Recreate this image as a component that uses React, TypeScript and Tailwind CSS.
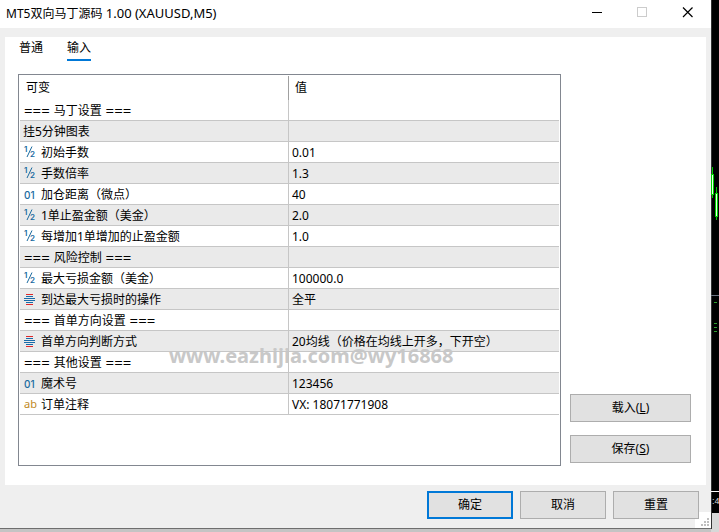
import type { ReactNode } from 'react';

type Kind = 'double' | 'int' | 'enum' | 'string';

type Row = { kind?: Kind; name: string; value?: string; heading?: boolean };

const rows: Row[] = [
  { name: '马丁设置', heading: true },
  { name: '挂5分钟图表' },
  { kind: 'double', name: '初始手数', value: '0.01' },
  { kind: 'double', name: '手数倍率', value: '1.3' },
  { kind: 'int', name: '加仓距离（微点）', value: '40' },
  { kind: 'double', name: '1单止盈金额（美金）', value: '2.0' },
  { kind: 'double', name: '每增加1单增加的止盈金额', value: '1.0' },
  { name: '风险控制', heading: true },
  { kind: 'double', name: '最大亏损金额（美金）', value: '100000.0' },
  { kind: 'enum', name: '到达最大亏损时的操作', value: '全平' },
  { name: '首单方向设置', heading: true },
  { kind: 'enum', name: '首单方向判断方式', value: '20均线（价格在均线上开多，下开空）' },
  { name: '其他设置', heading: true },
  { kind: 'int', name: '魔术号', value: '123456' },
  { kind: 'string', name: '订单注释', value: 'VX: 18071771908' },
];

function KindIcon({ kind }: { kind: Kind }) {
  if (kind === 'double')
    return (
      <span className="w-[18px] shrink-0">
        <svg
          className="block"
          width="14"
          height="18"
          viewBox="0 -3 14 18"
          fill="#1a6a9f"
          fontFamily="Inter, sans-serif"
          fontSize="8"
          fontWeight="600"
          aria-hidden="true"
        >
          <text x="1" y="6">1</text>
          <path d="M9 .5L4 11" stroke="#1a6a9f" strokeWidth="1" />
          <text x="7" y="11">2</text>
        </svg>
      </span>
    );
  if (kind === 'int')
    return (
      <span className="w-[18px] shrink-0 pt-px pl-px font-['Inter',sans-serif] text-[10px] font-medium text-[#1a6a9f]">
        01
      </span>
    );
  if (kind === 'string')
    return <span className="w-[18px] shrink-0 pl-px text-[11px] text-[#c08a1e]">ab</span>;
  return (
    <span className="w-[18px] shrink-0">
      <svg className="block" width="12" height="11" viewBox="0 0 12 11" shapeRendering="crispEdges" aria-hidden="true">
        <path d="M3 0h7v1H3zM3 10h7v1H3z" fill="#e0282a" />
        <path d="M3 2h7v1H3zM3 8h7v1H3zM1 4h11v1H1zM1 6h11v1H1z" fill="#1a6ba8" />
      </svg>
    </span>
  );
}

function Marks({ children }: { children: string }) {
  return <span className="whitespace-pre text-[15px]">{children}</span>;
}

function PushButton({ children, className }: { children: ReactNode; className: string }) {
  return (
    <button type="button" className={`h-7 bg-[#e1e1e1] text-center leading-4 ${className}`}>
      {children}
    </button>
  );
}

function TitleBar() {
  return (
    <header className="flex h-7 items-center bg-white pr-px">
      <h1 className="min-w-0 flex-1 truncate pl-1.5 pb-0.5 leading-4">
        MT5双向马丁源码<span className="text-[13px]"> 1.00 (XAUUSD,M5)</span>
      </h1>
      <button type="button" aria-label="最小化" className="flex h-6 w-[45px] justify-center pt-[5px]">
        <svg width="11" height="11" viewBox="0 0 11 11" shapeRendering="crispEdges">
          <path d="M0 5h10v1H0z" fill="#000" />
        </svg>
      </button>
      <button type="button" aria-label="最大化" disabled className="flex h-6 w-[45px] justify-center pt-[5px]">
        <svg width="11" height="11" viewBox="0 0 11 11" shapeRendering="crispEdges">
          <path d="M.5 .5h9v9h-9z" fill="none" stroke="#ccc" />
        </svg>
      </button>
      <button type="button" aria-label="关闭" className="flex h-6 w-[45px] justify-center pt-[5px]">
        <svg width="11" height="11" viewBox="0 0 11 11">
          <path d="M1 .5l9.5 9.5M10.5 .5L1 10" stroke="#000" strokeWidth="1.2" />
        </svg>
      </button>
    </header>
  );
}

function Inputs() {
  return (
    <div className="relative min-w-0 flex-1 border border-[#828790] bg-white p-px">
      <table className="w-full table-fixed border-separate border-spacing-0 text-left">
        <thead>
          <tr className="h-6">
            <th className="w-[269px] border-r border-[#a0a0a0] p-0 pl-1.5 font-normal">可变</th>
            <th className="p-0 pl-1.5 font-normal">值</th>
          </tr>
        </thead>
        <tbody>
          {rows.map((row) => (
            <tr key={row.name} className="even:bg-[#eaeaea]">
              <td className="border-r border-b border-[#c6c6c6] p-0">
                <div
                  className={`flex h-5 items-center leading-5 whitespace-nowrap ${row.heading ? 'pl-1' : 'pl-[3px]'}`}
                >
                  {row.kind && <KindIcon kind={row.kind} />}
                  {row.heading && <Marks>{'=== '}</Marks>}
                  <span className="pt-0.5">{row.name}</span>
                  {row.heading && <Marks>{' ==='}</Marks>}
                </div>
              </td>
              <td className="border-b border-[#c6c6c6] p-0">
                <div className="flex h-5 items-center pl-[3px] leading-5 whitespace-nowrap">
                  <span className="pt-0.5">{row.value}</span>
                </div>
              </td>
            </tr>
          ))}
        </tbody>
      </table>
      <div className="pointer-events-none absolute top-[267px] left-[150px] text-[20px] leading-7 font-bold text-[#c8c8c8]">
        www.eazhijia.com@wy16868
      </div>
    </div>
  );
}

function ChartEdge() {
  return (
    <aside className="w-2 shrink-0 overflow-hidden bg-[#d8d8d8]">
      <svg width="8" height="532" viewBox="0 0 8 532" shapeRendering="crispEdges" aria-hidden="true">
        <path d="M0 0h8v513H0z" fill="#000" />
        <path d="M0 0h1v529H0z" fill="#333" />
        <path d="M1 167h1v31H1zM0 174h3v21H0zM5 187h1v33H5zM4 193h3v24H4z" fill="#00d000" />
        <path d="M1 175h1v19H1zM5 194h1v22H5z" fill="#e8ffe8" />
        <path d="M0 295h8v1H0z" fill="#6b7380" />
        <path d="M3 302h3v1H3zM3 323h3v1H3zM3 327h3v1H3zM3 331h3v1H3z" fill="#2fa02f" />
        <path d="M0 491h8v1H0z" fill="#fff" />
        <text x="1" y="504" fill="#ddd" fontSize="9" fontFamily="Liberation Sans, sans-serif">
          :4
        </text>
      </svg>
    </aside>
  );
}

export default function App() {
  return (
    <div className="flex min-h-screen bg-[#c4c4c4] font-['Noto_Sans','Noto_Sans_CJK_SC',sans-serif] text-[12px] text-black">
      <div className="flex min-w-0 flex-1 flex-col pb-[3px]">
        <div className="flex flex-1 flex-col border-b border-[#6e6e6e] bg-[#efefef]">
          <TitleBar />
          <main className="mx-[5px] mt-[9px] flex flex-1 flex-col bg-white pr-[15px] pb-[19px] pl-[13px]">
            <nav className="flex gap-6 pl-px">
              <button type="button" className="h-6 border-b-2 border-transparent leading-5">
                普通
              </button>
              <button type="button" className="h-6 border-b-2 border-[#0078d7] leading-5">
                输入
              </button>
            </nav>
            <div className="mt-[13px] flex flex-1 gap-[9px]">
              <Inputs />
              <div className="flex w-[121px] flex-col justify-end gap-[13px] pb-[3px]">
                <PushButton className="border border-[#adadad]">
                  载入(<u>L</u>)
                </PushButton>
                <PushButton className="border border-[#adadad]">
                  保存(<u>S</u>)
                </PushButton>
              </div>
            </div>
          </main>
          <footer className="relative flex h-[43px] justify-end gap-[7px] pt-1.5 pr-3">
            <svg className="absolute right-0 bottom-0" width="16" height="16" viewBox="0 0 16 16" aria-hidden="true">
              <path d="M0 0h16v16H0z" fill="#fff" />
              <path
                d="M12 6h2v2h-2zM9 9h2v2H9zM12 9h2v2h-2zM6 12h2v2H6zM9 12h2v2H9zM12 12h2v2h-2z"
                fill="#bfbfbf"
              />
            </svg>
            <PushButton className="relative w-[86px] border-2 border-[#0078d7]">确定</PushButton>
            <PushButton className="relative w-[86px] border border-[#adadad]">取消</PushButton>
            <PushButton className="relative w-[86px] border border-[#adadad]">重置</PushButton>
          </footer>
        </div>
      </div>
      <ChartEdge />
    </div>
  );
}
